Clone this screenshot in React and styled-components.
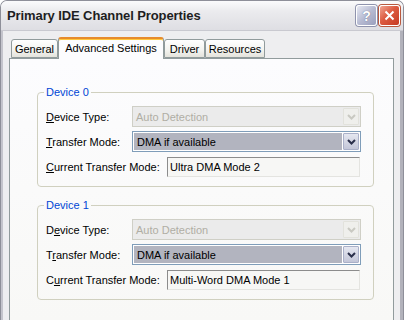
import React from 'react'
import styled, { createGlobalStyle, css } from 'styled-components'

const GlobalStyle = createGlobalStyle`
  html, body {
    margin: 0;
    padding: 0;
    background: #ffffff;
  }
  body {
    font-family: "Liberation Sans", Arial, sans-serif;
    font-size: 11px;
    color: #000;
  }
`

const Window = styled.div`
  width: 404px;
  height: 320px;
  box-sizing: border-box;
  overflow: hidden;
  display: flex;
  flex-direction: column;
  border: 1px solid #8e8f99;
  border-bottom: 0;
  border-radius: 7px 7px 0 0;
  background: #eeeef0;
`

const TitleBar = styled.div`
  height: 29px;
  flex: none;
  display: flex;
  align-items: center;
  justify-content: space-between;
  padding: 0 3px 0 6px;
  background: linear-gradient(#fbfbfc 0%, #ebebee 35%, #dedee3 100%);
  border-bottom: 1px solid #c9c9d0;
`

const Title = styled.span`
  font-family: "Liberation Sans", Arial, sans-serif;
  font-weight: bold;
  font-size: 13px;
  color: #1e1e22;
  letter-spacing: -0.1px;
`

const Controls = styled.div`
  display: flex;
  gap: 2px;
`

const CaptionButton = styled.div`
  width: 21px;
  height: 21px;
  box-sizing: border-box;
  border: 1px solid #ffffff;
  border-radius: 3px;
  display: flex;
  align-items: center;
  justify-content: center;
  color: #fff;
  font-weight: bold;
  font-size: 14px;
  ${({ $variant }) =>
    $variant === 'close'
      ? css`
          background: linear-gradient(135deg, #f0a592 0%, #dc5a40 45%, #c63a22 100%);
          box-shadow: 0 0 0 1px #b8593f;
        `
      : css`
          background: linear-gradient(135deg, #e6e8f2 0%, #b7bbd2 50%, #9a9fbd 100%);
          box-shadow: 0 0 0 1px #8f93ad;
          text-shadow: 0 0 1px #555a78;
        `}
`

const Body = styled.div`
  flex: 1;
  display: flex;
  flex-direction: column;
  padding: 6px 6px 0 6px;
  border-left: 2px solid #c4c4cc;
  border-right: 3px solid #b2b2bb;
  min-height: 0;
`

const TabRow = styled.div`
  display: flex;
  align-items: flex-end;
  height: 21px;
  padding-left: 2px;
  position: relative;
  z-index: 1;
`

const Tab = styled.div`
  box-sizing: border-box;
  width: ${({ $w }) => $w}px;
  height: ${({ $active }) => ($active ? 22 : 19)}px;
  margin-bottom: ${({ $active }) => ($active ? -1 : 0)}px;
  border: 1px solid #919b9c;
  border-bottom: ${({ $active }) => ($active ? '0' : '1px solid #919b9c')};
  border-radius: 3px 3px 0 0;
  display: flex;
  justify-content: center;
  align-items: ${({ $active }) => ($active ? 'flex-start' : 'center')};
  padding-top: ${({ $active }) => ($active ? 3 : 1)}px;
  white-space: nowrap;
  font-size: 11px;
  color: #000;
  background: ${({ $active }) =>
    $active ? '#fcfcfe' : 'linear-gradient(#ffffff 0%, #f3f3ef 60%, #e4e3dc 100%)'};
  ${({ $active }) =>
    $active &&
    css`
      border-top: 2px solid #e68b2c;
      box-shadow: inset 0 1px 0 #ffc73c;
    `}
`

const Panel = styled.div`
  flex: 1;
  border: 1px solid #919b9c;
  border-bottom: 0;
  background: linear-gradient(#fcfcfe 0%, #f8f8f6 100%);
  padding: 27px 19px 0 27px;
  display: flex;
  flex-direction: column;
  gap: 12px;
`

const Group = styled.fieldset`
  margin: 0;
  padding: 8px 11px 9px 8px;
  border: 1px solid #d0d0bf;
  border-radius: 4px;
  min-inline-size: 0;
  display: flex;
  flex-direction: column;
  gap: 4px;
`

const Legend = styled.legend`
  padding: 0 2px;
  margin-left: -2px;
  line-height: 12px;
  font-size: 11px;
  color: #0046d5;
`

const Row = styled.div`
  display: flex;
  align-items: center;
  height: 21px;
`

const Label = styled.label`
  width: ${({ $w }) => $w}px;
  flex: none;
  white-space: nowrap;
  color: #000;
  u {
    text-decoration: underline;
    text-underline-offset: 1px;
  }
`

const Combo = styled.div`
  width: 229px;
  height: 21px;
  box-sizing: border-box;
  display: flex;
  align-items: stretch;
  border: 1px solid ${({ $disabled }) => ($disabled ? '#cfcfc6' : '#7f9db9')};
  background: ${({ $disabled }) => ($disabled ? '#ebebeb' : '#ffffff')};
  padding: ${({ $disabled }) => ($disabled ? '0' : '1px')};
`

const ComboText = styled.div`
  flex: 1;
  display: flex;
  align-items: center;
  padding-left: 3px;
  color: ${({ $disabled }) => ($disabled ? '#b0aea4' : '#000')};
  background: ${({ $disabled }) => ($disabled ? 'transparent' : '#b2b4bf')};
  margin-right: 1px;
`

const DropButton = styled.div`
  width: 16px;
  flex: none;
  box-sizing: border-box;
  display: flex;
  align-items: center;
  justify-content: center;
  border-radius: 1px;
  ${({ $disabled }) =>
    $disabled
      ? css`
          margin: 1px;
          background: #efefec;
          border: 1px solid #e2e2dc;
        `
      : css`
          background: linear-gradient(#e5e7f0 0%, #c3c6d8 100%);
          border: 1px solid #aab0c8;
        `}
`

const Field = styled.div`
  width: 193px;
  height: 20px;
  box-sizing: border-box;
  display: flex;
  align-items: center;
  padding-left: 2px;
  background: #f7f7f5;
  border-top: 1px solid #8c8c8c;
  border-left: 1px solid #8c8c8c;
  border-right: 1px solid #e4e4e0;
  border-bottom: 1px solid #e4e4e0;
  color: #000;
`

const Chevron = ({ color }) => (
  <svg width="9" height="6" viewBox="0 0 9 6">
    <path d="M1 1 L4.5 4.5 L8 1" fill="none" stroke={color} strokeWidth="2" />
  </svg>
)

const devices = [
  {
    name: 'Device 0',
    type: ['', 'D', 'evice Type:'],
    transfer: ['', 'T', 'ransfer Mode:'],
    current: ['', 'C', 'urrent Transfer Mode:'],
    mode: 'Ultra DMA Mode 2'
  },
  {
    name: 'Device 1',
    type: ['D', 'e', 'vice Type:'],
    transfer: ['T', 'r', 'ansfer Mode:'],
    current: ['C', 'u', 'rrent Transfer Mode:'],
    mode: 'Multi-Word DMA Mode 1'
  }
]

const Accel = ({ parts }) => (
  <>
    {parts[0]}
    <u>{parts[1]}</u>
    {parts[2]}
  </>
)

const tabs = [
  { label: 'General', w: 47 },
  { label: 'Advanced Settings', w: 106, active: true },
  { label: 'Driver', w: 41 },
  { label: 'Resources', w: 60 }
]

const App = () => (
  <>
    <GlobalStyle />
    <Window>
      <TitleBar>
        <Title>Primary IDE Channel Properties</Title>
        <Controls>
          <CaptionButton>?</CaptionButton>
          <CaptionButton $variant="close">
            <svg width="11" height="11" viewBox="0 0 11 11">
              <path d="M1.5 1.5 L9.5 9.5 M9.5 1.5 L1.5 9.5" stroke="#fff" strokeWidth="2" />
            </svg>
          </CaptionButton>
        </Controls>
      </TitleBar>
      <Body>
        <TabRow>
          {tabs.map((t) => (
            <Tab key={t.label} $w={t.w} $active={t.active}>
              {t.label}
            </Tab>
          ))}
        </TabRow>
        <Panel>
          {devices.map((d) => (
            <Group key={d.name}>
              <Legend>{d.name}</Legend>
              <Row>
                <Label $w={86}>
                  <Accel parts={d.type} />
                </Label>
                <Combo $disabled>
                  <ComboText $disabled>Auto Detection</ComboText>
                  <DropButton $disabled>
                    <Chevron color="#c9c9c2" />
                  </DropButton>
                </Combo>
              </Row>
              <Row>
                <Label $w={86}>
                  <Accel parts={d.transfer} />
                </Label>
                <Combo>
                  <ComboText>DMA if available</ComboText>
                  <DropButton>
                    <Chevron color="#2a2f4a" />
                  </DropButton>
                </Combo>
              </Row>
              <Row>
                <Label $w={121}>
                  <Accel parts={d.current} />
                </Label>
                <Field>{d.mode}</Field>
              </Row>
            </Group>
          ))}
        </Panel>
      </Body>
    </Window>
  </>
)

export default App
